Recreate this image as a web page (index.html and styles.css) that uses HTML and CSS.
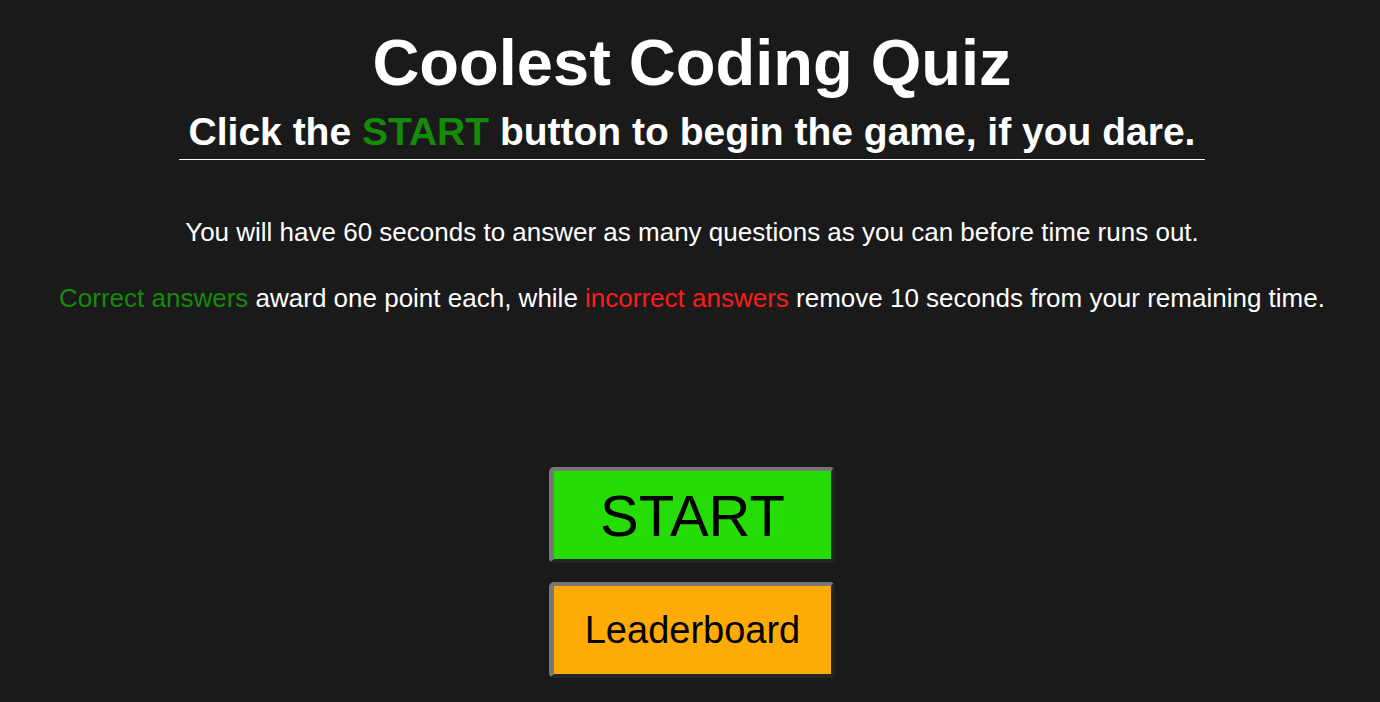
FILE: index.html
```html
<!DOCTYPE html>
<html lang="en">
<head>
<meta charset="utf-8">
<title>Coolest Coding Quiz</title>
<link rel="stylesheet" href="styles.css">
</head>
<body>
<main class="page">
  <header class="intro">
    <h1 class="title">Coolest Coding Quiz</h1>
    <h2 class="subtitle">Click the <span class="good">START</span> button to begin the game, if you dare.</h2>
  </header>
  <section class="rules">
    <p class="rule">You will have 60 seconds to answer as many questions as you can before time runs out.</p>
    <p class="rule"><span class="correct">Correct answers</span> award one point each, while <span class="bad">incorrect answers</span> remove 10 seconds from your remaining time.</p>
  </section>
  <div class="actions">
    <button class="btn btn-start" type="button">START</button>
    <button class="btn btn-leader" type="button">Leaderboard</button>
  </div>
</main>
</body>
</html>
```

FILE: styles.css
```css
html, body {
  margin: 0;
  padding: 0;
  background: #1a1a1a;
}

body {
  font-family: "Liberation Sans", Arial, Helvetica, sans-serif;
  color: #ffffff;
}

.page {
  display: flex;
  flex-direction: column;
  align-items: center;
  text-align: center;
  padding-left: 4px;
}

.intro {
  display: flex;
  flex-direction: column;
  align-items: center;
}

.title {
  margin: 25px 0 0;
  font-size: 65px;
  font-weight: bold;
  line-height: normal;
}

.subtitle {
  display: inline-block;
  margin: 10px 0 0;
  padding: 0 10px 5px;
  font-size: 39px;
  font-weight: bold;
  line-height: normal;
  border-bottom: 1px solid #ffffff;
}

.good {
  color: #158a0b;
}

.rules {
  margin-top: 57px;
  display: flex;
  flex-direction: column;
  gap: 35px;
}

.rule {
  margin: 0;
  font-size: 26px;
  line-height: normal;
}

.correct {
  color: #158a0b;
}

.bad {
  color: #ff1a1a;
}

.actions {
  margin-top: 153px;
  display: flex;
  flex-direction: column;
  align-items: center;
  gap: 19px;
}

.btn {
  width: 286px;
  height: 96px;
  box-sizing: border-box;
  border-width: 4px 4px 4px 5px;
  border-style: solid;
  border-color: #777777 #262626 #262626 #777777;
  border-radius: 5px;
  color: #000000;
  font-family: "Liberation Sans", Arial, Helvetica, sans-serif;
  padding: 0;
  cursor: pointer;
}

.btn-start {
  background: #25dc05;
  font-size: 58px;
}

.btn-leader {
  background: #ffab07;
  font-size: 38px;
}
```
